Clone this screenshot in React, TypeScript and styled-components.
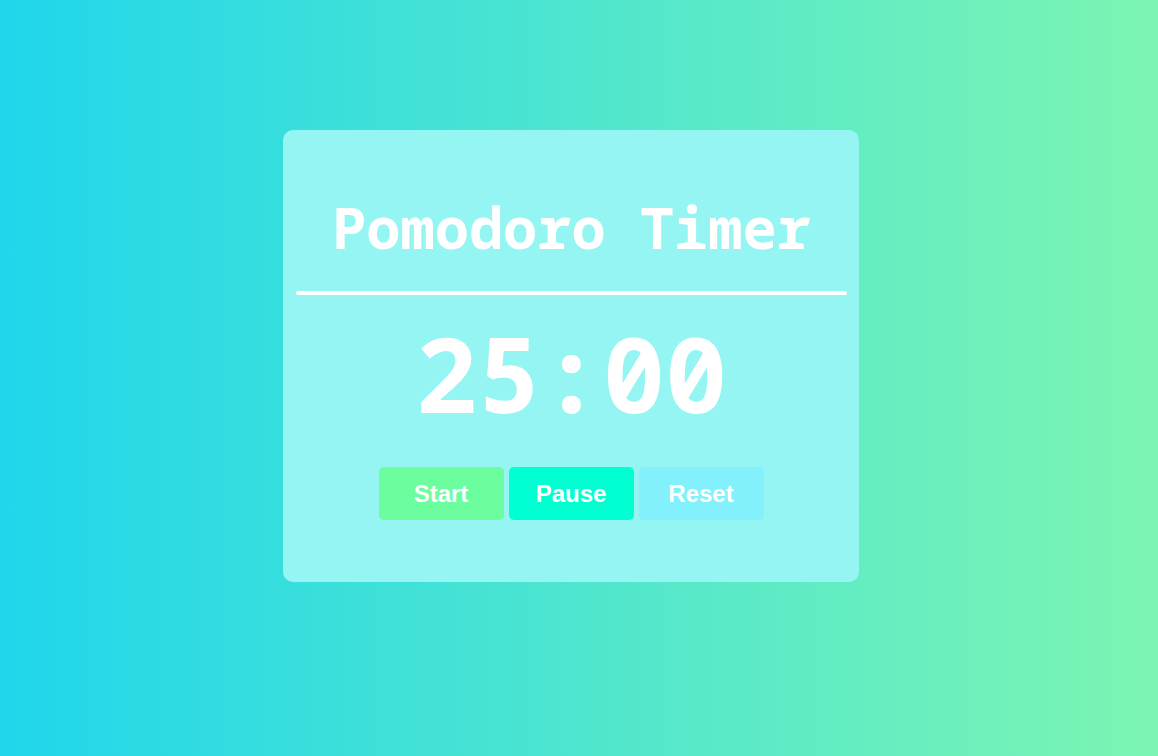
import React from "react";
import styled, { createGlobalStyle } from "styled-components";

const GlobalStyle = createGlobalStyle`
  html, body {
    margin: 0;
    padding: 0;
  }
  body {
    font-family: "Noto Sans Mono", "DejaVu Sans Mono", monospace;
  }
`;

const Page = styled.div`
  box-sizing: border-box;
  width: 100%;
  min-height: 756px;
  background: linear-gradient(to right, #20d6eb, #7cf5b2);
  display: flex;
  justify-content: center;
  align-items: flex-start;
  padding: 130px 16px 0 0;
`;

const Card = styled.div`
  box-sizing: border-box;
  width: 576px;
  height: 452px;
  background: #94f5f3;
  border-radius: 10px;
  padding: 65px 12px 0 13px;
  display: flex;
  flex-direction: column;
  align-items: stretch;
`;

const Title = styled.h1`
  margin: 0;
  font-family: "Noto Sans Mono", "DejaVu Sans Mono", monospace;
  font-weight: bold;
  font-size: 57px;
  line-height: 65px;
  color: #ffffff;
  text-align: center;
`;

const Divider = styled.div`
  height: 4px;
  margin-top: 31px;
  background: #ffffff;
  border-radius: 2px;
`;

const Time = styled.div`
  margin-top: 17px;
  font-family: "Noto Sans Mono", "DejaVu Sans Mono", monospace;
  font-weight: bold;
  font-size: 104px;
  line-height: 121px;
  color: #ffffff;
  text-align: center;
`;

const Controls = styled.div`
  margin-top: 34px;
  display: flex;
  justify-content: center;
  gap: 5px;
  padding-right: 1px;
`;

const Button = styled.button<{ $bg: string }>`
  width: 125px;
  height: 53px;
  border: none;
  border-radius: 5px;
  background: ${(p) => p.$bg};
  color: #ffffff;
  font-family: "Liberation Sans", Arial, sans-serif;
  font-weight: bold;
  font-size: 24px;
  cursor: pointer;
  padding: 0;
`;

export default function App() {
  return (
    <>
      <GlobalStyle />
      <Page>
        <Card>
          <Title>Pomodoro Timer</Title>
          <Divider />
          <Time>25:00</Time>
          <Controls>
            <Button $bg="#6bfd9e">Start</Button>
            <Button $bg="#00ffd1">Pause</Button>
            <Button $bg="#82f1fb">Reset</Button>
          </Controls>
        </Card>
      </Page>
    </>
  );
}
